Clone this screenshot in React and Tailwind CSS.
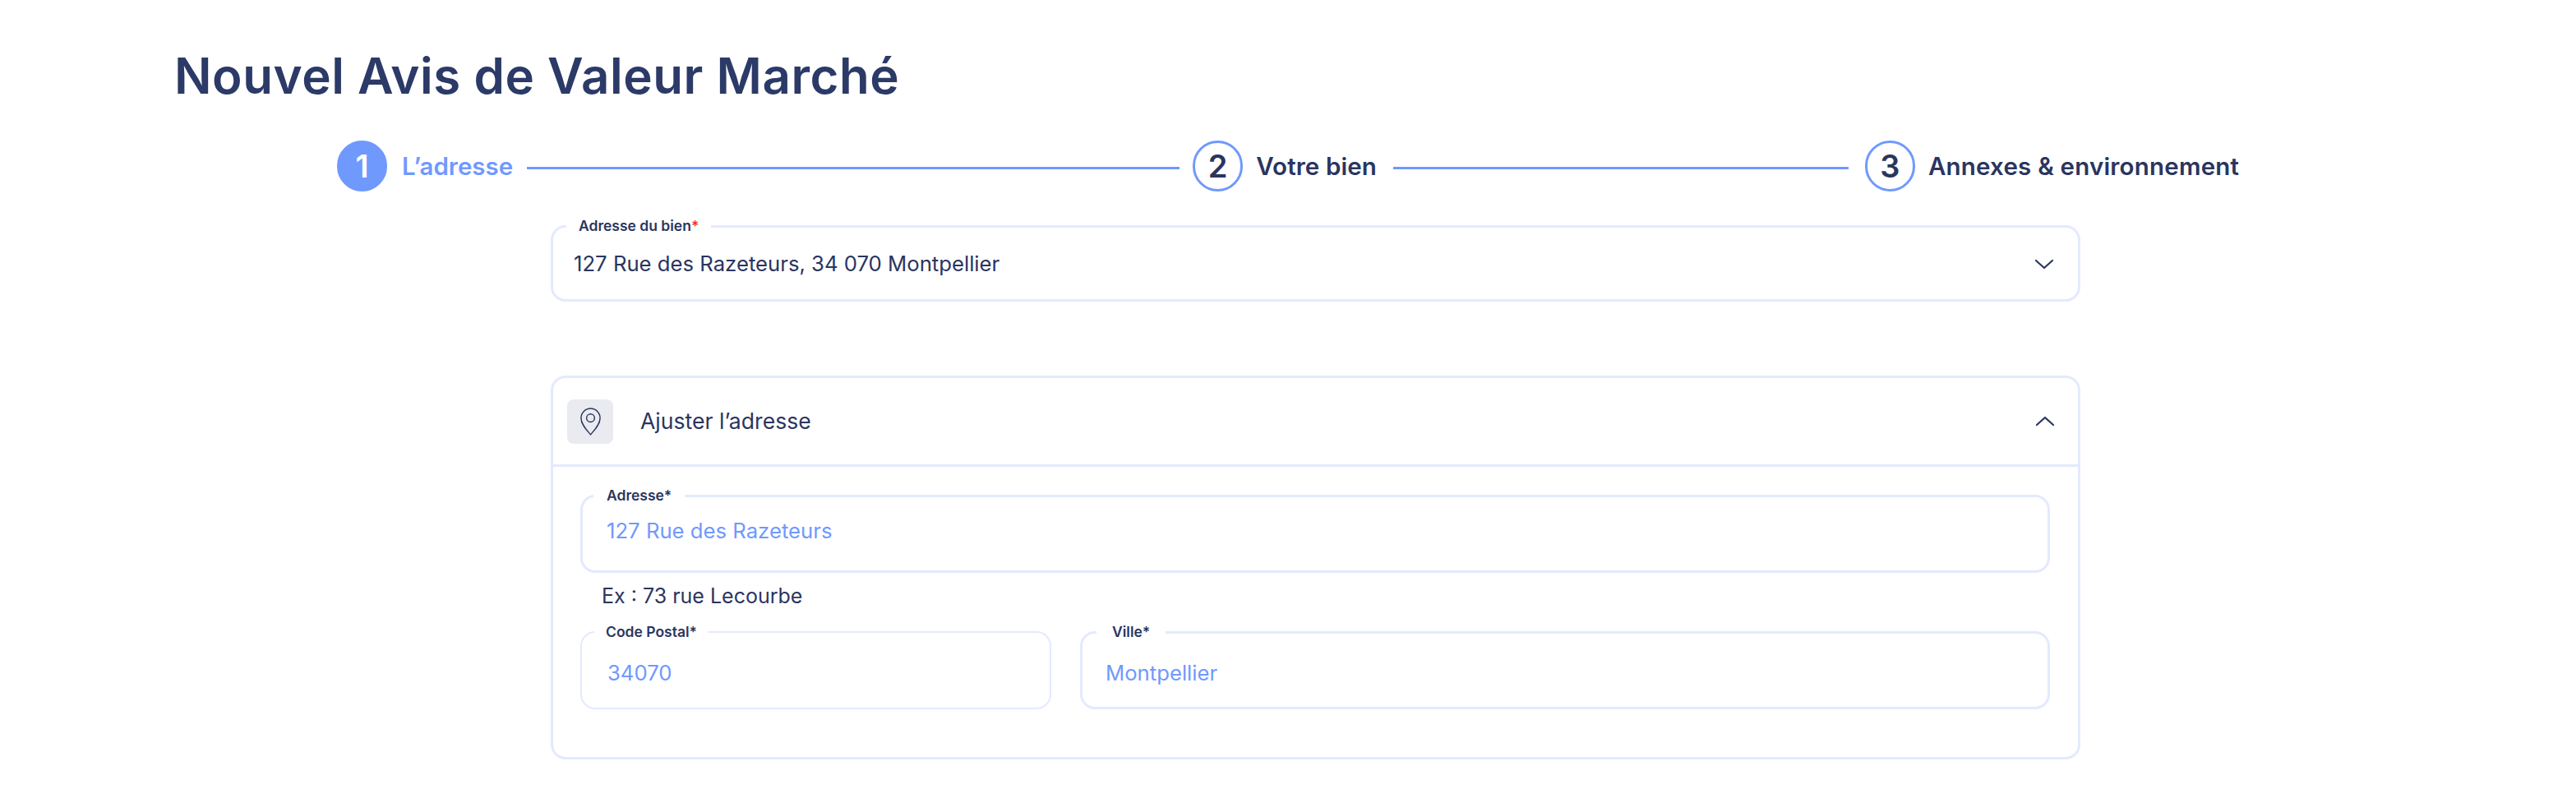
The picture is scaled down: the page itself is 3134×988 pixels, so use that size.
const navy = 'text-[#2a3560]'

function Step({ n, label, active, labelClass }) {
  return (
    <div className="flex items-center shrink-0">
      <div
        className={`w-[61px] h-[62px] rounded-full flex items-center justify-center text-[38px] font-semibold border-[3px] border-[#7099fe] ${
          active ? 'bg-[#7099fe] text-white' : `bg-white ${navy}`
        }`}
      >
        {n}
      </div>
      <span className={`text-[29.5px] font-semibold whitespace-nowrap ${labelClass} ${active ? 'text-[#7099fe]' : navy}`}>
        {label}
      </span>
    </div>
  )
}

function Line({ className }) {
  return <div className={`h-[3px] mt-[4px] bg-[#7099fe] ${className}`} />
}

function Field({ label, value, className = '', legendClass = '', valueClass = 'pl-[14px]', border = 'border-[3px]', children }) {
  return (
    <fieldset className={`${border} border-[#e3eafe] rounded-[18px] min-w-0 ${className}`}>
      <legend className={`text-[17.5px] leading-[22px] font-semibold ${navy} ${legendClass}`}>{label}</legend>
      {children || <div className={`text-[25.7px] leading-[40px] pt-[12px] text-[#7099fe] ${valueClass}`}>{value}</div>}
    </fieldset>
  )
}

export default function App() {
  return (
    <div className="min-h-screen bg-white font-['Inter',sans-serif] pt-[56px] pb-[50px]">
      <h1 className="ml-[212px] text-[60px] leading-[72px] font-semibold tracking-[0.55px] text-[#2b3a67]">Nouvel Avis de Valeur Marché</h1>

      {/* Stepper */}
      <div className="flex items-center ml-[410px] mt-[43px]">
        <Step n="1" label="L’adresse" active labelClass="ml-[18px]" />
        <Line className="w-[794px] ml-[17px] mr-[16px]" />
        <Step n="2" label="Votre bien" labelClass="ml-[16px] tracking-[0.1px]" />
        <Line className="w-[554px] ml-[20px] mr-[20px]" />
        <Step n="3" label="Annexes & environnement" labelClass="ml-[16px] tracking-[0.2px]" />
      </div>

      <div className="ml-[670px] w-[1861px]">
        {/* Adresse du bien */}
        <Field
          className="mt-[31px] h-[103px] pl-[16px]"
          legendClass="px-[15px]"
          label={<>Adresse du bien<span className="text-red-500">*</span></>}
        >
          <div className={`flex items-center justify-between pl-[9px] pr-[29px] pt-[15px] text-[25.7px] leading-[40px] ${navy}`}>
            <span>127 Rue des Razeteurs, 34 070 Montpellier</span>
            <svg width="24" height="13" viewBox="0 0 24 13" fill="none" stroke="#2a3560" strokeWidth="2.2" strokeLinecap="round" strokeLinejoin="round">
              <path d="M2 2l10 9 10-9" />
            </svg>
          </div>
        </Field>

        {/* Ajuster l'adresse */}
        <div className="mt-[90px] border-[3px] border-[#e3eafe] rounded-[18px] h-[467px]">
          <div className={`flex items-center justify-between h-[108px] pl-[17px] pr-[28px] border-b-[3px] border-[#e3eafe] ${navy}`}>
            <div className="flex items-center">
              <div className="w-[56px] h-[54px] rounded-[8px] bg-[#e9ebf0] flex items-center justify-center">
                <svg width="27" height="35" viewBox="0 0 28 36" fill="none" stroke="#2a3560" strokeWidth="1.5">
                  <path d="M14 35C9 29 2 22 2 14a12 12 0 0 1 24 0c0 8-7 15-12 21z" strokeLinejoin="round" />
                  <circle cx="14" cy="14" r="5" />
                </svg>
              </div>
              <span className="ml-[33px] text-[26.6px]">Ajuster l’adresse</span>
            </div>
            <svg width="24" height="13" viewBox="0 0 24 13" fill="none" stroke="#2a3560" strokeWidth="2.2" strokeLinecap="round" strokeLinejoin="round">
              <path d="M2 11l10-9 10 9" />
            </svg>
          </div>

          <div className="pl-[33px] pr-[34px] pt-[24px]">
            <Field className="h-[105px] pl-[13px]" legendClass="px-[16px]" valueClass="pl-[16px]" label="Adresse*" value="127 Rue des Razeteurs" />
            <p className={`ml-[26px] mt-[8px] text-[25px] leading-[40px] ${navy}`}>Ex : 73 rue Lecourbe</p>
            <div className="flex gap-[35px] mt-[13px]">
              <Field border="border-2" className="h-[105px] w-[573px] pl-[15px]" legendClass="px-[14px]" valueClass="pl-[16px] pt-[19px]" label="Code Postal*" value="34070" />
              <Field className="h-[105px] flex-1 pl-[17px]" legendClass="px-[19px]" valueClass="pl-[11px] pt-[19px]" label="Ville*" value="Montpellier" />
            </div>
          </div>
        </div>
      </div>
    </div>
  )
}
